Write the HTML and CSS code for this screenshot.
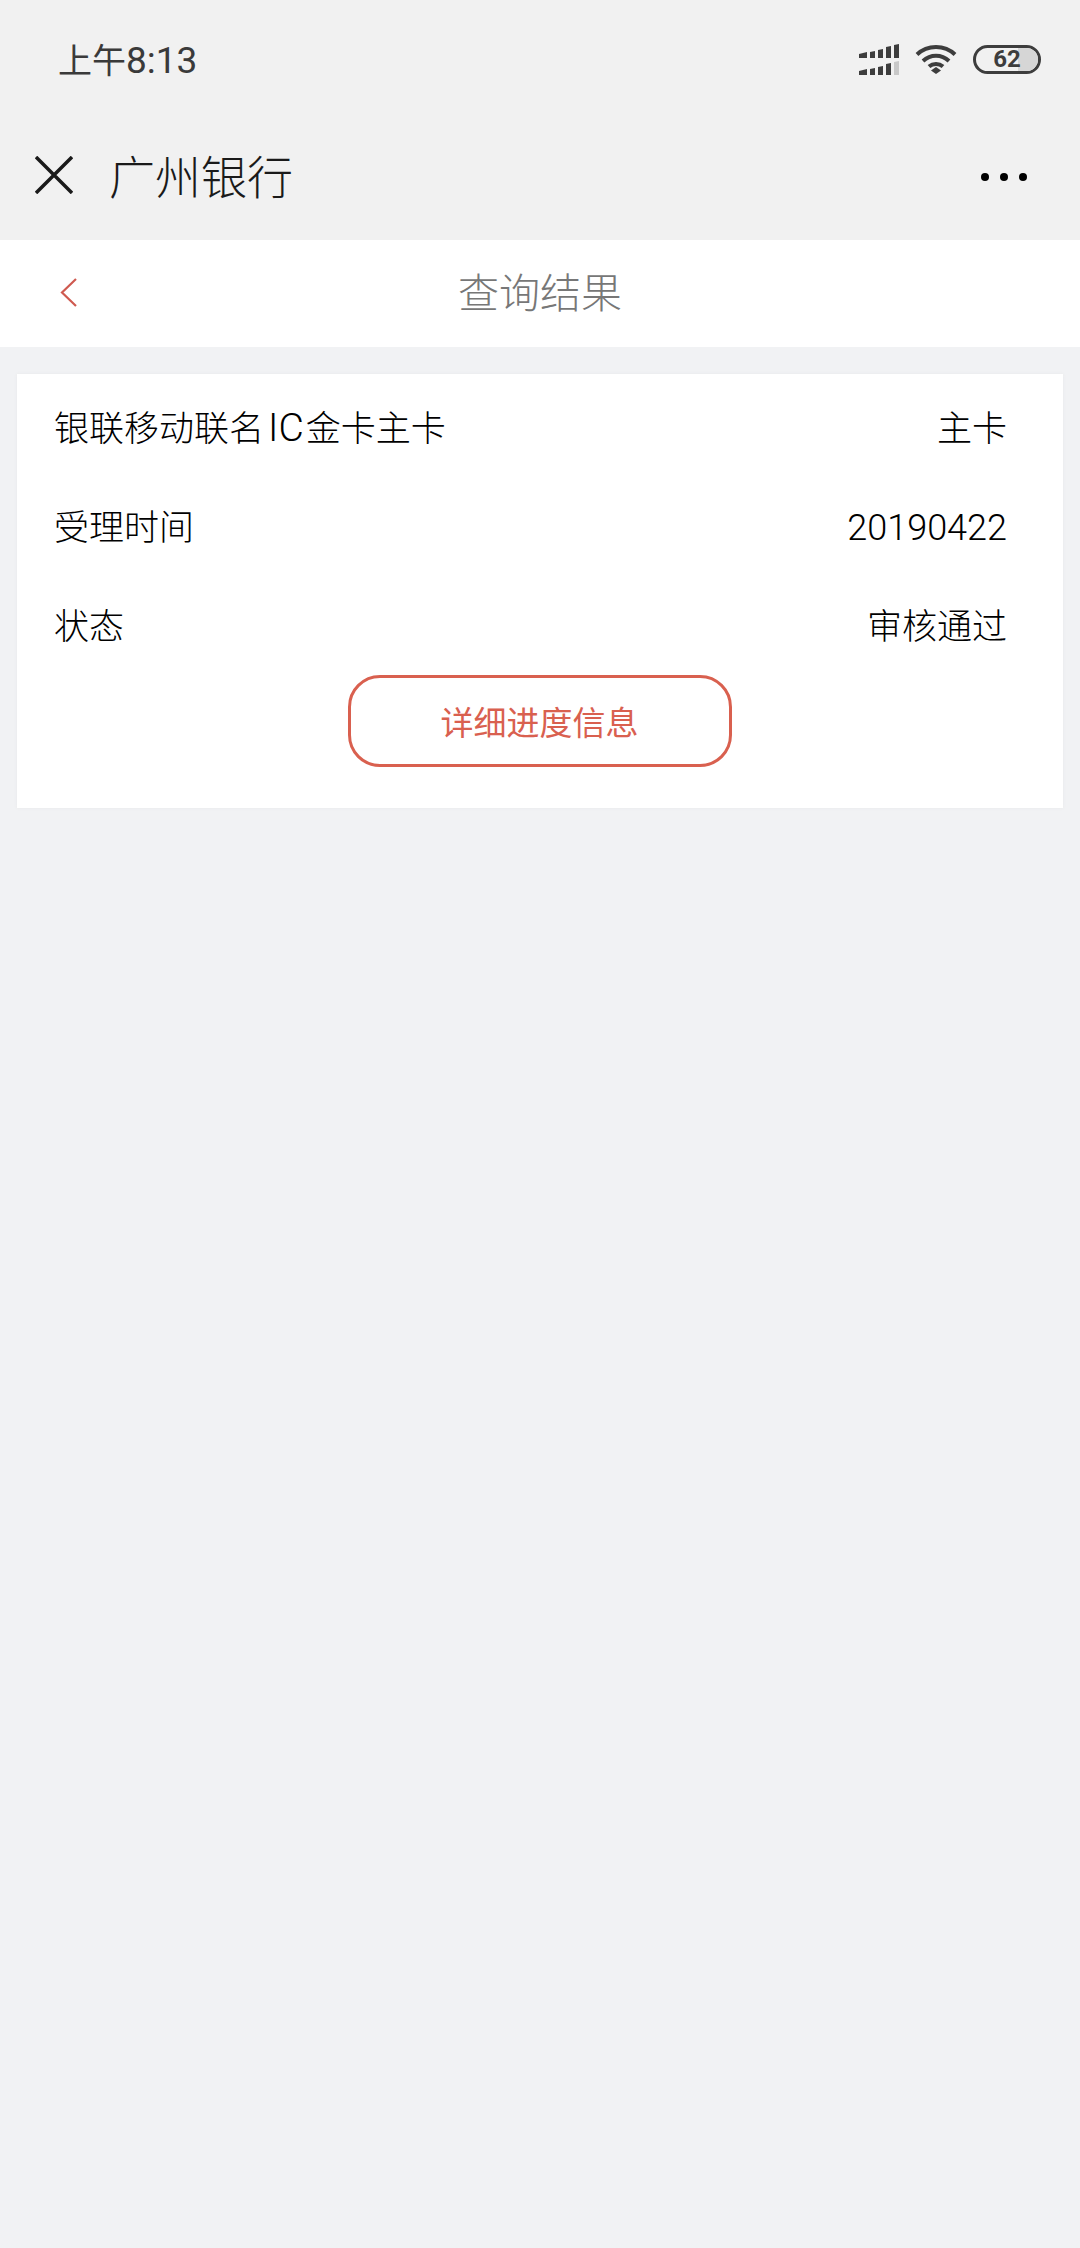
FILE: index.html

```html
<!DOCTYPE html>
<html lang="zh-CN">
<head>
  <meta charset="UTF-8" />
  <meta name="viewport" content="width=device-width, initial-scale=1.0"/>
  <title>查询结果</title>
  <link rel="stylesheet" href="styles.css">
</head>
<body>

  <div class="status-bar">
    <span class="clock"><span class="clock-cjk">上午</span>8:13</span>
    <div class="status-icons">
      <svg class="signal" width="40" height="31" viewBox="0 0 40 31">
        <path fill="#3d3d3d" d="M0 10l8-2v6H0zM11 8l5-1v7h-5zM19 6l5-1v9h-5zM27 3l5-1v12h-5zM35 1l5-1v14h-5z"/>
        <path fill="#3d3d3d" d="M0 27l8-2v6H0zM11 25l5-1v7h-5zM19 23l5-1v9h-5zM27 20l5-1v12h-5z"/>
        <path fill="#c8c8c8" d="M35 18l5-1v14h-5z"/>
      </svg>
      <svg class="wifi" width="42" height="30" viewBox="0 0 42 30">
        <path fill="none" stroke="#3d3d3d" stroke-width="4" d="M2 10.500C12.500 .500 29.500 .500 40 10.500"/>
        <path fill="none" stroke="#3d3d3d" stroke-width="4" d="M8 17C15.500 10 26.500 10 34 17"/>
        <path fill="none" stroke="#3d3d3d" stroke-width="4" d="M14 22.500C18 19 24 19 28 22.500"/>
        <path fill="#3d3d3d" d="M21 23l5 3.500-5 3.500-5-3.500z"/>
      </svg>
      <div class="battery">
        <div class="battery-fill"></div>
        <span class="battery-num">62</span>
      </div>
    </div>
  </div>

  <div class="nav-bar">
    <svg class="close-icon" width="38" height="38" viewBox="0 0 38 38">
      <path fill="none" stroke="#1a1a1a" stroke-width="3.500" d="M1 1l36 36M37 1L1 37"/>
    </svg>
    <span class="nav-title">广州银行</span>
    <div class="more">
      <i></i><i></i><i></i>
    </div>
  </div>

  <div class="page-head">
    <svg class="back-icon" width="18" height="30" viewBox="0 0 18 30">
      <path fill="none" stroke="#cf5a50" stroke-width="2.200" d="M16 1L2 14.500 16 28"/>
    </svg>
    <h1>查询结果</h1>
  </div>

  <div class="card">
    <div class="row"><span>银联移动联名<span class="latin">IC</span>金卡主卡</span><span>主卡</span></div>
    <div class="row"><span>受理时间</span><span class="digits">20190422</span></div>
    <div class="row"><span>状态</span><span>审核通过</span></div>
    <a class="detail-btn" href="#">详细进度信息</a>
  </div>

</body>
</html>
```

FILE: styles.css

```css
body { margin: 0; height: 2248px; background: #f1f2f4; font-family: Roboto, "Noto Sans CJK SC", sans-serif; font-weight: 300; color: #000; overflow: hidden; }

.status-bar { display: flex; justify-content: space-between; align-items: center; height: 116px; padding: 0 39px 0 58px; background: #f1f1f1; }
.clock { font-size: 37px; font-weight: 400; color: #3a3a3a; }
.clock-cjk { font-size: 34px; }
.status-icons { display: flex; align-items: center; gap: 16px; margin-top: 2px; }

.battery { position: relative; display: flex; justify-content: center; align-items: center; box-sizing: border-box; width: 68px; height: 29px; border: 3px solid #3d3d3d; border-radius: 15px; overflow: hidden; }
.battery-fill { position: absolute; top: 0; right: 0; bottom: 0; width: 20px; background: #d6d6d6; }
.battery-num { position: relative; font-size: 24px; font-weight: 700; color: #3d3d3d; line-height: 1; }

.nav-bar { display: flex; align-items: center; height: 124px; padding: 0 53px 0 35px; background: #f1f1f1; box-sizing: border-box; }
.close-icon { margin-bottom: 6px; }
.nav-title { margin-left: 36px; font-size: 46px; line-height: 50px; color: #1a1a1a; }
.more { display: flex; gap: 11px; margin: 0 0 2px auto; }
.more i { width: 8px; height: 8px; border-radius: 50%; background: #000; }

.page-head { position: relative; display: flex; justify-content: center; align-items: center; height: 107px; background: #fff; }
.page-head h1 { margin: 0; font-size: 41px; font-weight: 300; line-height: 50px; color: #777; }
.back-icon { position: absolute; left: 60px; top: 38px; }

.card { display: flex; flex-direction: column; gap: 29px; margin: 27px 17px 0 17px; padding: 21px 56px 41px 37px; background: #fff; box-shadow: 0 0 3px #e8e8ea; }
.row { display: flex; justify-content: space-between; align-items: baseline; height: 70px; line-height: 70px; font-size: 35px; }
.latin { font-size: 39px; line-height: 1; margin: 0 2px 0 4px; }
.digits { font-size: 36px; line-height: 1; }
.detail-btn { display: flex; justify-content: center; align-items: center; box-sizing: border-box; align-self: center; width: 384px; height: 92px; margin: -17px 0 0 0; border: 3px solid #d9604f; border-radius: 32px; font-size: 33px; font-weight: 400; color: #d9604f; text-decoration: none; position: relative; left: 9px; }
```
